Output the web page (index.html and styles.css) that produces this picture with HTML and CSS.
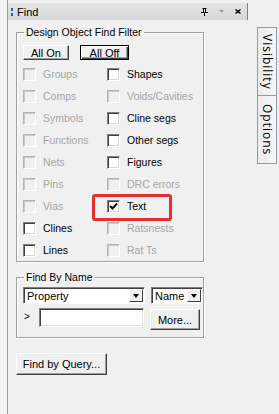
FILE: index.html
```html
<!DOCTYPE html>
<html lang="en">
<head>
  <meta charset="UTF-8">
  <title>Find</title>
  <link rel="stylesheet" href="styles.css">
</head>
<body>

  <div class="window">
    <div class="edge"></div>

    <div class="panel">
      <div class="titlebar">
        <span class="grip"><i></i><i></i></span>
        <span class="title">Find</span>
        <span class="tools">
          <svg width="7" height="8" viewBox="0 0 7 8"><path d="M1.5 0.5h4M2.5 0.5v3.5M4.5 0.5v3.5M0 4.5h7M3.5 4.5v3.5" stroke="#000" stroke-width="1" fill="none"/></svg>
          <svg class="menu" width="5" height="3" viewBox="0 0 5 3"><path d="M0 0h5L2.5 3z" fill="#a0a0a0"/></svg>
          <svg width="6" height="5" viewBox="0 0 6 5"><path d="M0.5 0.5l5 4M5.5 0.5l-5 4" stroke="#000" stroke-width="1.4" fill="none"/></svg>
        </span>
      </div>

      <div class="content">
        <fieldset class="group filter">
          <legend>Design Object Find Filter</legend>
          <div class="btn-row">
            <button class="btn">All On</button>
            <button class="btn default">All Off</button>
          </div>
          <div class="checks">
            <label class="check off"><span class="box"></span>Groups</label>
            <label class="check"><span class="box"></span>Shapes</label>
            <label class="check off"><span class="box"></span>Comps</label>
            <label class="check off"><span class="box"></span>Voids/Cavities</label>
            <label class="check off"><span class="box"></span>Symbols</label>
            <label class="check"><span class="box"></span>Cline segs</label>
            <label class="check off"><span class="box"></span>Functions</label>
            <label class="check"><span class="box"></span>Other segs</label>
            <label class="check off"><span class="box"></span>Nets</label>
            <label class="check"><span class="box"></span>Figures</label>
            <label class="check off"><span class="box"></span>Pins</label>
            <label class="check off"><span class="box"></span>DRC errors</label>
            <label class="check off"><span class="box"></span>Vias</label>
            <label class="check marked"><span class="box"><svg width="9" height="9" viewBox="0 0 9 9"><path d="M1 4l2.5 2.5L8 1.5" stroke="#000" stroke-width="2" fill="none"/></svg></span>Text</label>
            <label class="check"><span class="box"></span>Clines</label>
            <label class="check off"><span class="box"></span>Ratsnests</label>
            <label class="check"><span class="box"></span>Lines</label>
            <label class="check off"><span class="box"></span>Rat Ts</label>
          </div>
        </fieldset>

        <fieldset class="group byname">
          <legend>Find By Name</legend>
          <div class="name-row">
            <div class="combo wide"><span>Property</span><span class="arrow"></span></div>
            <div class="combo narrow"><span>Name</span><span class="arrow"></span></div>
          </div>
          <div class="name-row second">
            <span class="prompt">&gt;</span>
            <div class="field"></div>
            <button class="btn more">More...</button>
          </div>
        </fieldset>

        <button class="btn query">Find by Query...</button>
      </div>
    </div>

    <div class="tabs">
      <div class="tab">Visibility</div>
      <div class="tab">Options</div>
    </div>
  </div>

</body>
</html>
```

FILE: styles.css
```css
body {
  margin: 0;
  background: #f0f0f0;
  font-family: 'Liberation Sans', Arial, sans-serif;
  font-size: 10.5px;
  color: #000;
}

.window {
  display: flex;
  height: 414px;
  overflow: hidden;
}

.edge {
  width: 7px;
  border-right: 1px solid #a0a0a0;
  background: #f4f4f4;
}

.panel {
  width: 240px;
  padding-top: 3px;
}

.titlebar {
  height: 17px;
  display: flex;
  align-items: center;
  background: linear-gradient(#e4e4e4, #d8d8d8);
  border-right: 1px solid #808080;
}

.grip {
  display: flex;
  flex-direction: column;
  gap: 2px;
  margin: 0 4px 0 3px;
}

.grip i {
  width: 2px;
  height: 3px;
  background: #1c5fc4;
}

.title {
  font-size: 11px;
}

.tools {
  margin-left: auto;
  display: flex;
  align-items: center;
  gap: 11px;
  margin-right: 6px;
}

.content {
  padding: 6px 0 0 8px;
}

.group {
  width: 180px;
  margin: 0;
  padding: 0 0 0 6px;
  border: 1px solid #a0a0a0;
  box-shadow: inset 1px 1px #fff, 1px 1px #fff;
}

.group legend {
  padding: 0 2px;
  margin-left: 1px;
  line-height: 13px;
}

.filter {
  padding-top: 6px;
}

.btn {
  font-family: inherit;
  font-size: 11px;
  color: #000;
  background: #f0f0f0;
  border: 1px solid;
  border-color: #fff #404040 #404040 #fff;
  box-shadow: inset -1px -1px #a0a0a0;
  padding: 0;
  line-height: 12px;
}

.btn.default {
  border-color: #000;
  box-shadow: inset 1px 1px #fff, inset -1px -1px #404040, inset -2px -2px #a0a0a0;
}

.btn-row {
  display: flex;
  gap: 11px;
}

.btn-row .btn {
  height: 15px;
  width: 46px;
}

.btn-row .default {
  width: 49px;
}

.checks {
  display: grid;
  grid-template-columns: 84px 1fr;
  grid-auto-rows: 22px;
  margin-top: 3px;
}

.check {
  display: flex;
  align-items: center;
  gap: 7px;
}

.box {
  width: 11px;
  height: 11px;
  border: 1px solid;
  border-color: #808080 #fff #fff #808080;
  box-shadow: inset 1px 1px #404040, inset -1px -1px #d8d8d8;
  background: #fff;
  display: flex;
  align-items: center;
  justify-content: center;
}

.check.off {
  color: #a6a6a6;
}

.check.off .box {
  border-color: #b4b4b4 #fff #fff #b4b4b4;
  box-shadow: inset 1px 1px #c8c8c8;
  background: #f0f0f0;
}

.marked {
  position: relative;
}

.marked::after {
  content: "";
  position: absolute;
  left: -15px;
  top: -1px;
  width: 74px;
  height: 21px;
  border: 3px solid #e8302a;
  border-radius: 3px;
}

.byname {
  margin-top: 9px;
  padding: 3px 0 7px 6px;
}

.name-row {
  display: flex;
  gap: 6px;
}

.name-row.second {
  margin-top: 4px;
  align-items: flex-start;
}

.combo {
  height: 13px;
  display: flex;
  align-items: center;
  justify-content: space-between;
  background: #fff;
  border: 1px solid;
  border-color: #808080 #fff #fff #808080;
  box-shadow: inset 1px 1px #404040;
  padding: 1px 1px 1px 3px;
  font-size: 11px;
}

.combo.wide {
  width: 116px;
}

.combo.narrow {
  width: 46px;
}

.arrow {
  width: 12px;
  height: 11px;
  background: #f0f0f0;
  border: 1px solid;
  border-color: #fff #404040 #404040 #fff;
  position: relative;
}

.arrow::after {
  content: "";
  position: absolute;
  left: 3px;
  top: 4px;
  border-left: 3px solid transparent;
  border-right: 3px solid transparent;
  border-top: 4px solid #000;
}

.prompt {
  width: 9px;
  margin: 3px 0 0 1px;
  font-size: 10px;
}

.field {
  width: 103px;
  height: 17px;
  background: #fff;
  border: 1px solid;
  border-color: #808080 #fff #fff #808080;
  box-shadow: inset 1px 1px #404040, inset -1px -1px #e3e3e3;
}

.btn.more {
  width: 50px;
  height: 21px;
  margin-top: 1px;
}

.btn.query {
  display: block;
  margin-top: 15px;
  width: 91px;
  height: 22px;
}

.tabs {
  padding: 27px 0 0 9px;
}

.tab {
  writing-mode: vertical-rl;
  width: 18px;
  border: 1px solid #8c9cb4;
  border-top: none;
  background: linear-gradient(to right, #ececec, #f6f6f6);
  font-family: 'Open Sans', sans-serif;
  font-size: 12px;
  letter-spacing: 1px;
  line-height: 18px;
  text-align: center;
  padding: 4px 0;
}

.tab:first-child {
  border-top: 1px solid #8c9cb4;
  height: 59px;
}

.tab:last-child {
  height: 59px;
}
```
